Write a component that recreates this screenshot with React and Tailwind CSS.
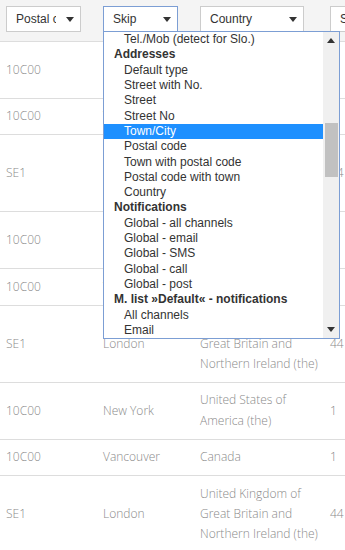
import React from "react";

const rows = [
    { code: "10C00", city: "New York", country: ["United States of", "America (the)"], num: "1" },
    { code: "10C00", city: "Vancouver", country: ["Canada"], num: "1" },
    { code: "SE1", city: "London", country: ["United Kingdom of", "Great Britain and", "Northern Ireland (the)"], num: "44" },
    { code: "10C00", city: "New York", country: ["United States of", "America (the)"], num: "1" },
    { code: "10C00", city: "Vancouver", country: ["Canada"], num: "1" },
    { code: "SE1", city: "London", country: ["United Kingdom of", "Great Britain and", "Northern Ireland (the)"], num: "44" },
    { code: "10C00", city: "New York", country: ["United States of", "America (the)"], num: "1" },
    { code: "10C00", city: "Vancouver", country: ["Canada"], num: "1" },
    { code: "SE1", city: "London", country: ["United Kingdom of", "Great Britain and", "Northern Ireland (the)"], num: "44" },
];

const options = [
    { label: "Tel./Mob (detect for Slo.)" },
    { label: "Addresses", group: true },
    { label: "Default type" },
    { label: "Street with No." },
    { label: "Street" },
    { label: "Street No" },
    { label: "Town/City", selected: true },
    { label: "Postal code" },
    { label: "Town with postal code" },
    { label: "Postal code with town" },
    { label: "Country" },
    { label: "Notifications", group: true },
    { label: "Global - all channels" },
    { label: "Global - email" },
    { label: "Global - SMS" },
    { label: "Global - call" },
    { label: "Global - post" },
    { label: "M. list »Default« - notifications", group: true },
    { label: "All channels" },
    { label: "Email" },
];

function Arrow({ down = true, className = "" }) {
    return (
        <svg width="8" height="5" viewBox="0 0 8 5" className={className}>
            <polygon points={down ? "0,0 8,0 4,5" : "0,5 8,5 4,0"} fill="#333" />
        </svg>
    );
}

function FakeSelect({ value, width, focused, children }) {
    return (
        <div
            className={
                "relative h-[26px] bg-white border flex items-center pl-[9px] pr-[6px] " +
                (focused ? "border-[#7c9ed4]" : "border-[#cccccc]")
            }
            style={{ width }}
        >
            <span className="flex-1 overflow-hidden whitespace-nowrap text-[12px] text-[#333] font-['Liberation_Sans',Arial,sans-serif]">
                {value}
            </span>
            <Arrow className="shrink-0 ml-[10px]" />
            {children}
        </div>
    );
}

function Dropdown() {
    return (
        <div className="absolute left-[-1px] top-full w-[237px] h-[308px] bg-white border border-[#7c9ed4] flex z-10 font-['Liberation_Sans',Arial,sans-serif] text-[12px] text-[#333]">
            <div className="flex-1 overflow-hidden">
                {options.map((o, i) => (
                    <div
                        key={i}
                        className={
                            "h-[15.32px] leading-[15.32px] whitespace-nowrap " +
                            (o.group ? "pl-[10px] font-bold " : "pl-[20px] ") +
                            (o.selected ? "bg-[#1e90ff] text-white" : "")
                        }
                    >
                        {o.label}
                    </div>
                ))}
            </div>
            {/* scrollbar */}
            <div className="w-[16px] bg-[#f0f0f0] flex flex-col items-center">
                <div className="h-[16px] flex items-center justify-center">
                    <Arrow down={false} />
                </div>
                <div className="mt-[75px] w-[13px] h-[54px] bg-[#c1c1c1]" />
                <div className="flex-1" />
                <div className="h-[16px] flex items-center justify-center mb-[1px]">
                    <Arrow />
                </div>
            </div>
        </div>
    );
}

export default function App() {
    return (
        <div className="relative w-[345px] h-[550px] overflow-hidden bg-white font-['Open_Sans',sans-serif]">
            <div className="w-[520px]">
                {/* header with column filters */}
                <div className="flex h-[42px] bg-[#f4f4f4] border-b border-[#dddddd]">
                    <div className="w-[97px] px-[6px] pt-[6px]">
                        <FakeSelect value="Postal code" width={75} />
                    </div>
                    <div className="w-[97px] px-[6px] pt-[6px]">
                        <FakeSelect value="Skip" width={75} focused>
                            <Dropdown />
                        </FakeSelect>
                    </div>
                    <div className="w-[130px] px-[6px] pt-[6px]">
                        <FakeSelect value="Country" width={104} />
                    </div>
                    <div className="w-[120px] px-[6px] pt-[6px]">
                        <FakeSelect value="Skip" width={104} />
                    </div>
                </div>

                {/* rows */}
                {rows.map((r, i) => (
                    <div
                        key={i}
                        className="flex items-center border-b border-[#dddddd] py-[7.5px] text-[12px] font-light leading-[20.4px] text-[#8a8a8a]"
                    >
                        <div className="w-[97px] px-[6px]">{r.code}</div>
                        <div className="w-[97px] px-[6px]">{r.city}</div>
                        <div className="w-[130px] px-[6px]">
                            {r.country.map((l, j) => (
                                <div key={j} className="whitespace-nowrap">{l}</div>
                            ))}
                        </div>
                        <div className="w-[120px] px-[6px]">{r.num}</div>
                    </div>
                ))}
            </div>
        </div>
    );
}
